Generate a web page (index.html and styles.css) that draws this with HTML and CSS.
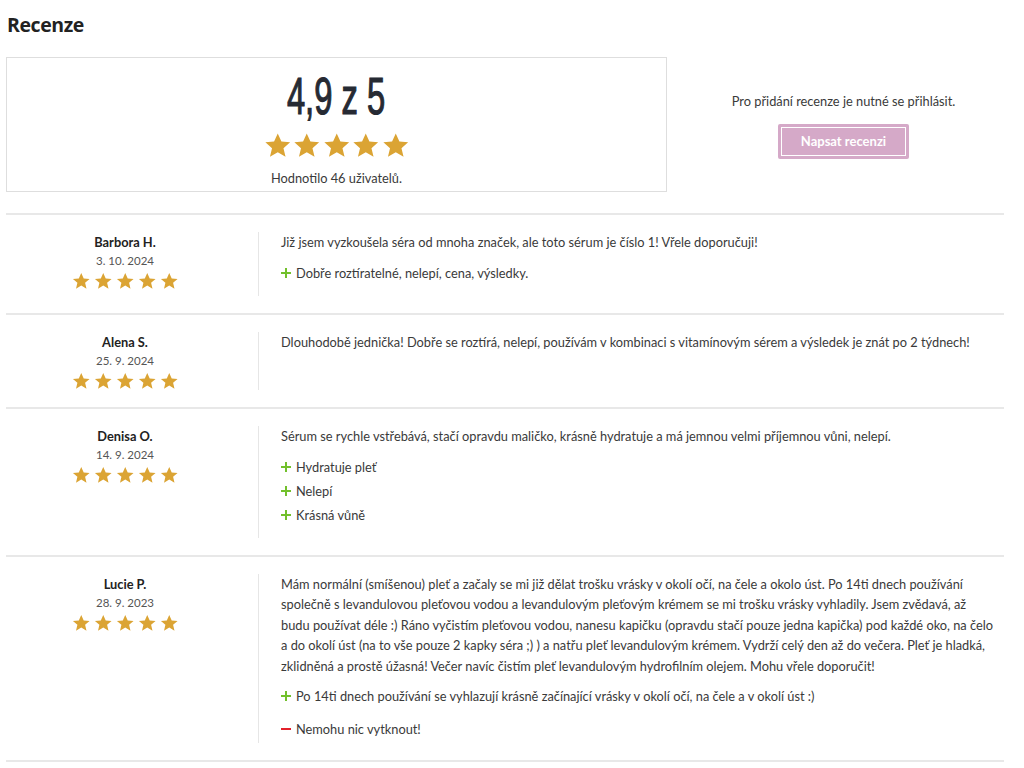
FILE: index.html
```html
<!DOCTYPE html>
<html lang="cs">
<head>
<meta charset="utf-8">
<title>Recenze</title>
<link rel="stylesheet" href="styles.css">
</head>
<body>
<svg width="0" height="0" class="defs">
  <defs>
    <symbol id="star" viewBox="0 0 24 24"><path d="M12 1.2l3.2 7.1 7.6.7-5.8 5.1 1.8 7.5L12 17.6l-6.8 4 1.8-7.5L1.2 9l7.6-.7z"/></symbol>
  </defs>
</svg>
<main class="page">
  <h1 class="title">Recenze</h1>

  <section class="summary">
    <div class="score-box">
      <div class="score"><span class="score-num">4,9 z 5</span></div>
      <div class="stars stars-big">
        <svg><use href="#star"/></svg><svg><use href="#star"/></svg><svg><use href="#star"/></svg><svg><use href="#star"/></svg><svg><use href="#star"/></svg>
      </div>
      <p class="score-count">Hodnotilo 46 uživatelů.</p>
    </div>
    <div class="write">
      <p class="write-note">Pro přidání recenze je nutné se přihlásit.</p>
      <button class="btn" type="button">Napsat recenzi</button>
    </div>
  </section>

  <ul class="reviews">
    <li class="review">
      <div class="author">
        <div class="name">Barbora H.</div>
        <div class="date">3. 10. 2024</div>
        <div class="stars stars-small"><svg><use href="#star"/></svg><svg><use href="#star"/></svg><svg><use href="#star"/></svg><svg><use href="#star"/></svg><svg><use href="#star"/></svg></div>
      </div>
      <div class="body">
        <p class="text">Již jsem vyzkoušela séra od mnoha značek, ale toto sérum je číslo 1! Vřele doporučuji!</p>
        <ul class="pros">
          <li>Dobře roztíratelné, nelepí, cena, výsledky.</li>
        </ul>
      </div>
    </li>
    <li class="review">
      <div class="author">
        <div class="name">Alena S.</div>
        <div class="date">25. 9. 2024</div>
        <div class="stars stars-small"><svg><use href="#star"/></svg><svg><use href="#star"/></svg><svg><use href="#star"/></svg><svg><use href="#star"/></svg><svg><use href="#star"/></svg></div>
      </div>
      <div class="body">
        <p class="text">Dlouhodobě jednička! Dobře se roztírá, nelepí, používám v kombinaci s vitamínovým sérem a výsledek je znát po 2 týdnech!</p>
      </div>
    </li>
    <li class="review">
      <div class="author">
        <div class="name">Denisa O.</div>
        <div class="date">14. 9. 2024</div>
        <div class="stars stars-small"><svg><use href="#star"/></svg><svg><use href="#star"/></svg><svg><use href="#star"/></svg><svg><use href="#star"/></svg><svg><use href="#star"/></svg></div>
      </div>
      <div class="body">
        <p class="text">Sérum se rychle vstřebává, stačí opravdu maličko, krásně hydratuje a má jemnou velmi příjemnou vůni, nelepí.</p>
        <ul class="pros">
          <li>Hydratuje pleť</li>
          <li>Nelepí</li>
          <li>Krásná vůně</li>
        </ul>
      </div>
    </li>
    <li class="review">
      <div class="author">
        <div class="name">Lucie P.</div>
        <div class="date">28. 9. 2023</div>
        <div class="stars stars-small"><svg><use href="#star"/></svg><svg><use href="#star"/></svg><svg><use href="#star"/></svg><svg><use href="#star"/></svg><svg><use href="#star"/></svg></div>
      </div>
      <div class="body">
        <p class="text">Mám normální (smíšenou) pleť a začaly se mi již dělat trošku vrásky v okolí očí, na čele a okolo úst. Po 14ti dnech používání společně s levandulovou pleťovou vodou a levandulovým pleťovým krémem se mi trošku vrásky vyhladily. Jsem zvědavá, až budu používat déle :) Ráno vyčistím pleťovou vodou, nanesu kapičku (opravdu stačí pouze jedna kapička) pod každé oko, na čelo a do okolí úst (na to vše pouze 2 kapky séra ;) ) a natřu pleť levandulovým krémem. Vydrží celý den až do večera. Pleť je hladká, zklidněná a prostě úžasná! Večer navíc čistím pleť levandulovým hydrofilním olejem. Mohu vřele doporučit!</p>
        <ul class="pros">
          <li>Po 14ti dnech používání se vyhlazují krásně začínající vrásky v okolí očí, na čele a v okolí úst :)</li>
        </ul>
        <ul class="cons">
          <li>Nemohu nic vytknout!</li>
        </ul>
      </div>
    </li>
  </ul>
</main>
</body>
</html>
```

FILE: styles.css
```css
* { box-sizing: border-box; }

html, body {
  margin: 0;
  padding: 0;
  background: #fff;
}

body {
  font-family: Lato, "Liberation Sans", sans-serif;
  font-size: 12.8px;
  color: #3a3a3a;
}

.defs {
  position: absolute;
  width: 0;
  height: 0;
  overflow: hidden;
}

.page {
  width: 998px;
  margin: 0 0 0 6px;
  padding-top: 12px;
}

.title {
  margin: 0 0 19px 1px;
  font-family: "Open Sans", "Liberation Sans", sans-serif;
  font-weight: 700;
  font-size: 19.5px;
  line-height: 26px;
  color: #222;
  letter-spacing: -0.4px;
}

.summary {
  display: flex;
  align-items: center;
}

.score-box {
  width: 661px;
  height: 135px;
  border: 1px solid #dedede;
  display: flex;
  flex-direction: column;
  align-items: center;
  padding-top: 12px;
}

.score {
  height: 52px;
  line-height: 52px;
  overflow: visible;
}

.score-num {
  display: inline-block;
  font-family: "Liberation Sans", Arial, sans-serif;
  font-weight: 400;
  font-size: 52px;
  color: #262a33;
  -webkit-text-stroke: 1.2px #262a33;
  transform: scaleX(0.63);
  white-space: nowrap;
}

.stars {
  display: flex;
  fill: #dba434;
}

.stars-big {
  margin-top: 10px;
  gap: 2px;
}

.stars-big svg {
  width: 27.5px;
  height: 27.5px;
}

.score-count {
  margin: 9px 0 0;
  line-height: 18px;
  color: #3a3a3a;
}

.write {
  flex: 1;
  display: flex;
  flex-direction: column;
  align-items: center;
  padding-left: 16px;
}

.write-note {
  margin: 0 0 13px;
  line-height: 20px;
  color: #3a3a3a;
}

.btn {
  width: 131px;
  height: 35px;
  border: 0;
  border-radius: 2px;
  background: #d5a9c8;
  color: #fff;
  font-family: Lato, "Liberation Sans", sans-serif;
  font-size: 13px;
  font-weight: 700;
  outline: 1px solid #fff;
  outline-offset: -4px;
  cursor: pointer;
}

.reviews {
  list-style: none;
  margin: 21px 0 0;
  padding: 0;
  border-bottom: 2px solid #e8e8e8;
}

.review {
  display: flex;
  padding: 17px 0 17px;
  border-top: 2px solid #e8e8e8;
}

.author {
  width: 253px;
  flex-shrink: 0;
  display: flex;
  flex-direction: column;
  align-items: center;
  padding-right: 14px;
  border-right: 1px solid #e6e6e6;
}

.name {
  font-weight: 700;
  color: #222;
  line-height: 20px;
}

.date {
  font-size: 11.5px;
  line-height: 18px;
  color: #555;
}

.stars-small {
  margin-top: 2px;
  gap: 3.5px;
}

.stars-small svg {
  width: 18.5px;
  height: 18.5px;
}

.body {
  flex: 1;
  padding: 0 7px 0 22px;
}

.text {
  margin: 0;
  line-height: 20.5px;
}

.pros, .cons {
  list-style: none;
  padding: 0;
  margin: 10px 0 13px;
}

.cons {
  margin-bottom: 0;
}

.pros li, .cons li {
  position: relative;
  padding-left: 15px;
  line-height: 20px;
  margin-bottom: 4px;
}

.pros li::before,
.pros li::after,
.cons li::before {
  content: "";
  position: absolute;
  left: 0;
  top: 10px;
  width: 10px;
  height: 2px;
  margin-top: -1px;
}

.pros li::before,
.pros li::after {
  background: #72c02c;
}

.pros li::after {
  left: 4px;
  top: 5px;
  width: 2px;
  height: 10px;
  margin-top: 0;
}

.cons li::before {
  background: #e3212b;
}
```
